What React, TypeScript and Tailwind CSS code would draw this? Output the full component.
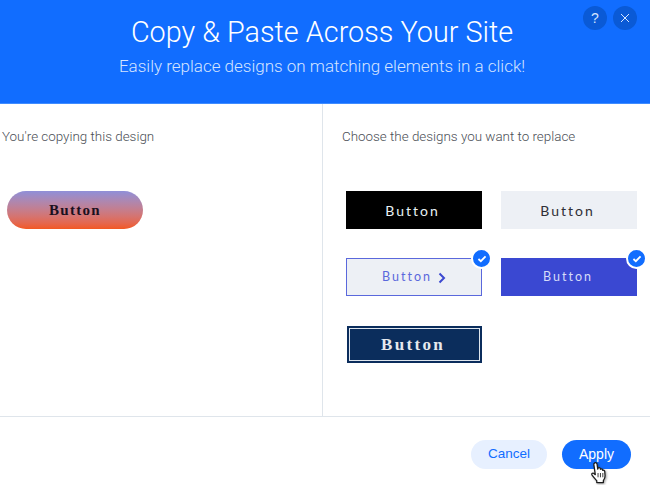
import React from "react";

const sans = "font-['Liberation_Sans',Arial,sans-serif]";
const light = "font-['Roboto','Liberation_Sans',sans-serif] font-light";
const geo = "font-['Lato','Liberation_Sans',sans-serif]";
const serif = "font-['Liberation_Serif','DejaVu_Serif',serif]";

const Check = ({ className }: { className: string }) => (
  <span className={`absolute box-content flex h-[17px] w-[17px] items-center justify-center rounded-full border-2 border-white bg-[#116dff] ${className}`}>
    <svg width="10" height="8" viewBox="0 0 11 9" fill="none">
      <path d="M1.5 4.5L4.2 7L9.5 1.5" stroke="white" strokeWidth="2" />
    </svg>
  </span>
);

const Hand = () => (
  <svg className="absolute left-[27px] top-[21px] drop-shadow-[1px_1px_1px_rgba(0,0,0,0.35)]" width="21" height="24" viewBox="0 0 24 28">
    <path
      d="M6.5 2.2c1.2-.6 2.4.1 2.6 1.3l.9 6 .3-1.3c.9-.9 2.2-.7 2.6.4l.2 1c.8-.8 2.1-.6 2.5.5l.2.9c.9-.6 2.1-.2 2.3 1l.4 5.2c.1 2.3-.8 4.2-2 5.8v2.2H8.8v-2.2c-1.6-1.6-3.4-3.9-5.6-6.7-.8-1.2.5-2.8 1.9-2l2 1.6L5.4 4.3c-.2-.9.3-1.7 1.1-2.1z"
      fill="white"
      stroke="#1c1c1c"
      strokeWidth="1.5"
      strokeLinejoin="round"
    />
    <path d="M10.3 14v5M13.1 14v5M15.9 14v5" stroke="#1c1c1c" strokeWidth="1" />
  </svg>
);

export default function App() {
  return (
    <div className={`flex h-[485px] w-[650px] flex-col overflow-hidden bg-white ${sans}`}>
      <header className="relative h-[104px] shrink-0 border-b border-[#3f8cff] bg-[#116dff] pr-[6px] pt-[13px] text-center">
        <h1 className={`text-[28.8px] leading-[38px] text-white ${light}`}>Copy &amp; Paste Across Your Site</h1>
        <p className={`mt-[5px] text-[17px] leading-[20px] text-[#d4e4ff] ${light}`}>
          Easily replace designs on matching elements in a click!
        </p>
        <div className="absolute right-[13px] top-[6px] flex gap-[6px]">
          <button className="flex h-6 w-6 items-center justify-center rounded-full bg-[#0a5ad6] text-[14px] text-[#d5e5ff]">?</button>
          <button className="flex h-6 w-6 items-center justify-center rounded-full bg-[#0a5ad6]">
            <svg width="10" height="10" viewBox="0 0 10 10" fill="none">
              <path d="M1 1L9 9M9 1L1 9" stroke="#d5e5ff" strokeWidth="1" />
            </svg>
          </button>
        </div>
      </header>

      <main className="flex h-[313px] shrink-0 border-b border-[#dfe5eb]">
        <section className="w-[323px] shrink-0 border-r border-[#dfe5eb] pl-[2px] pt-[24px]">
          <p className={`text-[13.4px] leading-[17px] text-[#4a4e55] ${light}`}>You're copying this design</p>
          <div className={`ml-[5px] mt-[46px] flex h-[38px] w-[136px] items-center justify-center rounded-full bg-gradient-to-b from-[#8f8fd8] to-[#f2581f] pt-[1px] text-[15px] font-bold tracking-[1.3px] text-[#1a1020] ${serif}`}>
            Button
          </div>
        </section>

        <section className="flex-1 pl-[19px] pt-[24px]">
          <p className={`text-[13.4px] leading-[17px] text-[#4a4e55] ${light}`}>Choose the designs you want to replace</p>
          <div className="ml-[4px] mt-[46px] grid grid-cols-[136px_136px] gap-x-[19px] gap-y-[29px]">
            <div className={`flex h-[38px] items-center justify-center bg-black pr-[3px] text-[14px] tracking-[2px] text-[#e8f2f5] ${geo}`}>
              Button
            </div>
            <div className={`flex h-[38px] items-center justify-center bg-[#edf0f5] pr-[3px] text-[14px] tracking-[2px] text-[#2f2e36] ${geo}`}>
              Button
            </div>
            <div className={`relative flex h-[38px] items-center justify-center gap-[6px] border border-[#5a68dc] bg-[#edf0f5] pt-[1px] text-[12.5px] tracking-[2px] text-[#5a68dc] ${geo}`}>
              Button
              <svg width="8" height="12" viewBox="0 0 8 12" fill="none">
                <path d="M1.5 1.5L6 6L1.5 10.5" stroke="#3c49d0" strokeWidth="2" />
              </svg>
              <Check className="-right-[11px] -top-[11px]" />
            </div>
            <div className={`relative flex h-[38px] items-center justify-center bg-[#3a48d2] pr-[2px] pt-[1px] text-[12.5px] tracking-[2px] text-[#d6dcf8] ${geo}`}>
              Button
              <Check className="-right-[10px] -top-[10px]" />
            </div>
            <div className="ml-[1px] mt-[1px] flex h-[37px] w-[135px] items-center justify-center bg-[#0b2d5c] p-[2px]">
              <div className={`flex h-full w-full items-center justify-center border border-[#dfe6ee] pr-[3px] pt-[1px] text-[17px] font-bold tracking-[2.3px] text-[#e6e9ee] ${serif}`}>
                Button
              </div>
            </div>
          </div>
        </section>
      </main>

      <footer className="flex flex-1 items-start justify-end gap-[15px] pr-[19px] pt-[23px]">
        <button className="h-[29px] w-[76px] rounded-full bg-[#e7f0ff] text-[13.5px] text-[#116dff]">Cancel</button>
        <div className="relative">
          <button className="h-[29px] w-[69px] rounded-full bg-[#116dff] text-[14px] text-white">Apply</button>
          <Hand />
        </div>
      </footer>
    </div>
  );
}
